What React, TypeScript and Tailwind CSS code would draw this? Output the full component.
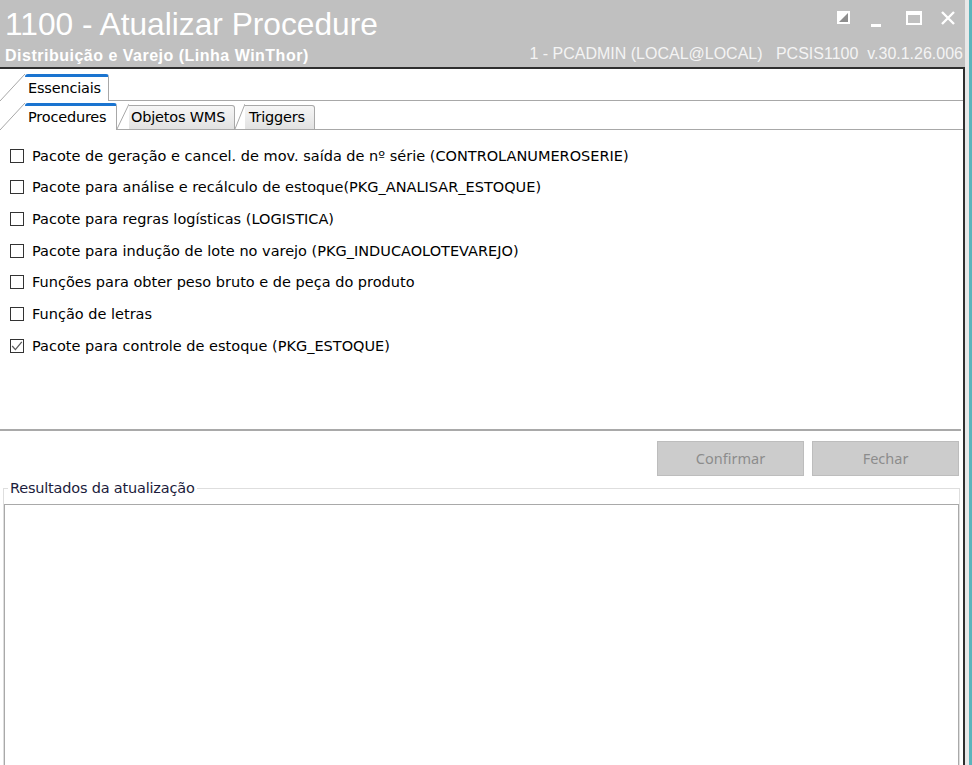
import React from "react";

const items = [
  { label: "Pacote de geração e cancel. de mov. saída de nº série (CONTROLANUMEROSERIE)", checked: false },
  { label: "Pacote para análise e recálculo de estoque(PKG_ANALISAR_ESTOQUE)", checked: false },
  { label: "Pacote para regras logísticas (LOGISTICA)", checked: false },
  { label: "Pacote para indução de lote no varejo (PKG_INDUCAOLOTEVAREJO)", checked: false },
  { label: "Funções para obter peso bruto e de peça do produto", checked: false },
  { label: "Função de letras", checked: false },
  { label: "Pacote para controle de estoque (PKG_ESTOQUE)", checked: true },
];

const Slant: React.FC<{ w: number; h: number }> = ({ w, h }) => (
  <svg width={w} height={h} className="block shrink-0">
    <line x1="0" y1={h} x2={w} y2="0" stroke="#a8a8a8" strokeWidth="1" />
  </svg>
);

const Checkbox: React.FC<{ checked: boolean }> = ({ checked }) => (
  <div className="w-[14px] h-[14px] border border-[#333] bg-white shrink-0 flex items-center justify-center">
    {checked && (
      <svg width="12" height="12" viewBox="0 0 12 12">
        <path d="M1.2 6 L4.4 9.6 L10.8 1.8" fill="none" stroke="#5a5a5a" strokeWidth="1.3" />
      </svg>
    )}
  </div>
);

const WindowControls: React.FC = () => (
  <div className="flex items-start pt-[11px]">
    <svg width="13" height="13" viewBox="0 0 13 13">
      <rect x="0" y="0" width="13" height="13" fill="#ffffff" />
      <path d="M11 2 L11 11 L2 11 Z" fill="#8e8e8e" />
    </svg>
    <div className="w-[10px] h-[3px] bg-white mt-[13px] ml-[21px]" />
    <div className="w-[16px] h-[14px] border-2 border-white border-t-[4px] ml-[25px]" />
    <svg width="16" height="16" viewBox="0 0 16 16" className="ml-[18px] -mt-[1px]">
      <path d="M2 2 L14 14 M14 2 L2 14" stroke="#ffffff" strokeWidth="2.4" />
    </svg>
  </div>
);

export default function App() {
  return (
    <div className="w-[972px] h-[765px] overflow-hidden flex bg-[#c9c9c9]">
      <div className="w-[965px] h-full flex flex-col bg-white">
        {/* title bar */}
        <div className="h-[67px] bg-[#c0c0c0] flex justify-between pl-[5px] text-white font-['Liberation_Sans',Arial,sans-serif]">
          <div className="flex flex-col">
            <div className="text-[31.7px] leading-[32px] pt-[8px]">1100 - Atualizar Procedure</div>
            <div className="text-[16px] font-bold tracking-[0.5px] leading-[18px] mt-[7px]">
              Distribuição e Varejo (Linha WinThor)
            </div>
          </div>
          <div className="flex flex-col items-end">
            <div className="pr-[9px]">
              <WindowControls />
            </div>
            <div className="text-[16px] leading-[18px] mt-[18px] whitespace-pre pr-[2px] text-[#f4f4f4]">
              {"1 - PCADMIN (LOCAL@LOCAL)   PCSIS1100  v.30.1.26.006"}
            </div>
          </div>
        </div>
        <div className="h-[2px] bg-[#2e2e2e]" />

        <div className="flex-1 flex flex-col border-r-[2px] border-[#2e2e2e] font-['DejaVu_Sans',Verdana,sans-serif] text-[14.5px] text-black">
          {/* tab row 1 */}
          <div className="flex items-end mt-[5px] h-[27px]">
            <Slant w={25} h={27} />
            <div className="h-[27px] w-[84px] border-t-[3px] border-[#1a74d0] rounded-t-[3px] border-r border-r-[#a8a8a8] bg-white pl-[3px] leading-[22px] tracking-[-0.2px]">
              Essenciais
            </div>
            <div className="flex-1 h-full border-b border-[#a8a8a8]" />
          </div>

          {/* tab row 2 */}
          <div className="flex items-end mt-[2px] h-[27px]">
            <Slant w={25} h={27} />
            <div className="h-[27px] w-[92px] border-t-[3px] border-[#1a74d0] rounded-t-[3px] border-r border-r-[#a8a8a8] bg-white pl-[3px] leading-[22px] tracking-[-0.2px]">
              Procedures
            </div>
            <div className="flex items-end h-[25px] border-b border-[#a8a8a8]">
              <Slant w={12} h={25} />
            </div>
            <div className="h-[25px] w-[106px] border-t border-r border-b border-[#a8a8a8] rounded-tr-[3px] bg-gradient-to-b from-[#f6f6f6] to-[#e2e2e2] pl-[2px] leading-[23px] tracking-[-0.2px]">
              Objetos WMS
            </div>
            <div className="flex items-end h-[25px] border-b border-[#a8a8a8]">
              <Slant w={10} h={25} />
            </div>
            <div className="h-[25px] w-[70px] border-t border-r border-b border-[#a8a8a8] rounded-tr-[3px] bg-gradient-to-b from-[#f6f6f6] to-[#e2e2e2] pl-[4px] leading-[23px] tracking-[-0.2px]">
              Triggers
            </div>
            <div className="flex-1 h-full border-b border-[#a8a8a8]" />
          </div>

          {/* checkbox list */}
          <div className="flex flex-col pl-[10px] pt-[10px] h-[298px]">
            {items.map((it) => (
              <div key={it.label} className="flex items-center gap-[8px] h-[31.67px] shrink-0">
                <Checkbox checked={it.checked} />
                <span className="leading-[16px] whitespace-nowrap">{it.label}</span>
              </div>
            ))}
          </div>
          <div className="h-[2px] bg-[#a9a9a9] mr-[2px] mt-[1px]" />

          {/* buttons */}
          <div className="flex justify-end gap-[8px] pt-[10px] pr-[4px] font-['Noto_Sans',sans-serif]">
            <button className="w-[147px] h-[35px] bg-[#cccccc] border border-[#bdbdbd] text-[#8c8c8c] text-[14.5px]">
              Confirmar
            </button>
            <button className="w-[147px] h-[35px] bg-[#cccccc] border border-[#bdbdbd] text-[#8c8c8c] text-[14.5px]">
              Fechar
            </button>
          </div>

          {/* group box */}
          <div className="flex-1 relative mt-[12px] ml-[3px] mr-[3px] border-l border-t border-r border-[#dedede]">
            <div className="absolute left-[4px] -top-[10px] bg-white px-[2px] text-[#1c1c3c] leading-[18px] tracking-[-0.2px]">
              Resultados da atualização
            </div>
            <div className="absolute left-0 right-0 top-[15px] bottom-0 border-l border-t border-r border-[#a9a9a9]" />
          </div>
        </div>
      </div>
      <div className="w-[4px] bg-[#e8e8e8]" />
      <div className="w-[3px] bg-[#5ab4bc]" />
    </div>
  );
}
